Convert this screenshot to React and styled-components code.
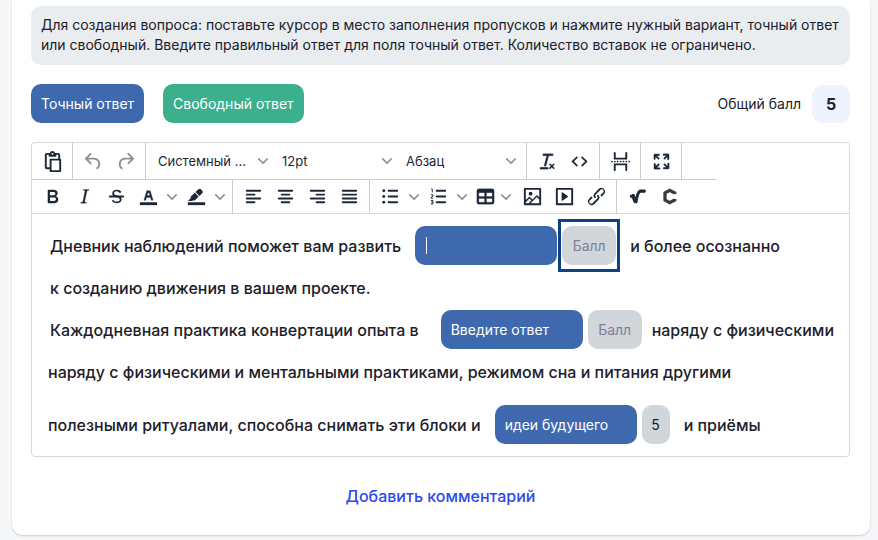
import React from "react";
import styled, { createGlobalStyle } from "styled-components";

const GlobalStyle = createGlobalStyle`
  *, *::before, *::after { box-sizing: border-box; }
  body {
    margin: 0;
    min-height: 100vh;
    background: #f5f7f9;
    color: #20202a;
    font-family: Inter, "Liberation Sans", sans-serif;
  }
  button, input, select { font: inherit; }
`;

const Card = styled.main`
  margin: 0 8px 4px 12px;
  padding: 6px 20px 28px 19px;
  background: #fff;
  border-radius: 0 0 10px 10px;
  box-shadow: 0 1px 2px #c9ced4;
`;

const Hint = styled.p`
  margin: 0 0 19px;
  padding: 9px 9px 10px 10px;
  border-radius: 10px;
  background: #e9edf0;
  font-size: 14px;
  line-height: 20px;
`;

const Actions = styled.div`
  display: flex;
  align-items: center;
  gap: 19px;
  margin-bottom: 19px;
`;

const ActionButton = styled.button`
  height: 39px;
  padding: 0 10px;
  border: 0;
  border-radius: 10px;
  background: ${(p) => (p.$tone === "green" ? "#3cb08c" : "#3f69af")};
  color: #fff;
  font-size: 14px;
  white-space: nowrap;
`;

const Total = styled.div`
  display: flex;
  align-items: center;
  gap: 11px;
  margin-left: auto;
  font-size: 14px;
`;

const TotalValue = styled.output`
  display: grid;
  place-items: center;
  width: 38px;
  height: 38px;
  border-radius: 10px;
  background: #edf4ff;
  font-size: 16px;
  font-weight: 700;
`;

const Editor = styled.section`
  border: 1px solid #d3dade;
  border-radius: 4px;
`;

const Toolbar = styled.div`
  border-bottom: 1px solid #d3d8dc;
`;

const ToolRow = styled.div`
  display: flex;
  width: fit-content;
  height: ${(p) => (p.$first ? "37px" : "33px")};
  padding-right: ${(p) => (p.$first ? "34px" : "0")};
  border-bottom: ${(p) => (p.$first ? "1px solid #cccccc" : "0")};
`;

const ToolGroup = styled.div`
  display: flex;
  align-items: center;
  padding: 0 4px;
  border-right: ${(p) => (p.$last ? "0" : "1px solid #cccccc")};
`;

const ToolButton = styled.button`
  display: grid;
  place-items: center;
  width: ${(p) => (p.$narrow ? "30px" : "32px")};
  height: 28px;
  padding: 0;
  border: 0;
  background: transparent;
  color: ${(p) => (p.$muted ? "#8b9099" : "#1c2838")};
`;

const MoreButton = styled.button`
  display: grid;
  place-items: center;
  width: ${(p) => (p.$narrow ? "12px" : "16px")};
  height: 28px;
  margin-right: ${(p) => (p.$narrow ? "4px" : "0")};
  padding: 0;
  border: 0;
  background: transparent;
  color: #8b9099;
`;

const Picker = styled.label`
  display: grid;
  grid-template-columns: 102px 22px;
  align-items: center;
  color: #8b9099;

  svg {
    grid-area: 1 / 2;
    justify-self: center;
    pointer-events: none;
  }
`;

const PickerSelect = styled.select`
  grid-area: 1 / 1 / 2 / 3;
  height: 28px;
  padding: 0 22px 0 8px;
  border: 0;
  background: transparent;
  color: #1c2838;
  font-size: 13px;
  appearance: none;
`;

const Body = styled.div`
  padding: 12px 14px 12px 16px;
  font-size: 16px;
  font-weight: 500;
  white-space: nowrap;
`;

const Line = styled.div`
  display: flex;
  align-items: center;
  min-height: ${(p) => (p.$blank ? "39px" : "45px")};
  padding-left: ${(p) => (p.$inset ? "2px" : "0")};
  margin-top: ${(p) => (p.$spaced ? "11px" : "0")};
`;

const Gap = styled.span`
  display: flex;
  align-items: center;
  gap: 5px;
  margin: ${(p) => (p.$wide ? "0 10px 0 22px" : "0 14px")};
`;

const AnswerInput = styled.input`
  width: 142px;
  height: 39px;
  padding: 0 10px;
  border: 0;
  border-radius: 10px;
  outline: 0;
  background: ${(p) =>
    p.$caret
      ? "linear-gradient(#fff, #fff) 11px center / 1px 17px no-repeat #3f69af"
      : "#3f69af"};
  color: #fff;
  font-size: 14px;
  font-weight: 400;

  &::placeholder { color: #fff; opacity: 1; }
`;

const ScoreInput = styled.input`
  width: ${(p) => (p.$short ? "28px" : "54px")};
  height: 39px;
  padding: 0;
  border: 0;
  border-radius: 10px;
  outline: 0;
  background: #d0d6d9;
  color: #20202a;
  font-size: 14px;
  font-weight: 400;
  text-align: center;

  &::placeholder { color: #80809a; opacity: 1; }
`;

const FocusFrame = styled.span`
  display: flex;
  margin: -7px -4px;
  padding: 4px 1px;
  border: 3px solid #0d4384;
`;

const CommentButton = styled.button`
  display: block;
  margin: 28px auto 0;
  padding: 0;
  border: 0;
  background: transparent;
  color: #2c49ee;
  font-size: 16px;
  font-weight: 500;
  line-height: 22px;
`;

const ICONS = {
  paste: (
    <path d="M18 9V5h-2v1c0 .6-.4 1-1 1H9a1 1 0 0 1-1-1V5H6v13h3V9h9ZM9 20H6a2 2 0 0 1-2-2V5c0-1.1.9-2 2-2h3.2A3 3 0 0 1 12 1a3 3 0 0 1 2.800 2H18a2 2 0 0 1 2 2v4c.6 0 1 .4 1 1v12c0 .6-.4 1-1 1H10a1 1 0 0 1-1-1v-2Zm2-9v10h8V11h-8Zm1-8a1 1 0 1 0 0 2 1 1 0 0 0 0-2Z" fillRule="evenodd" />
  ),
  undo: <path d="M6.4 8H12c3.7 0 6.2 2 6.8 5.1.6 2.7-.4 5.6-2.3 6.8a1 1 0 0 1-1-1.8c1.1-.6 1.8-2.7 1.4-4.6-.5-2.1-2.1-3.5-4.9-3.5H6.4l3.3 3.3a1 1 0 1 1-1.4 1.4l-5-5a1 1 0 0 1 0-1.4l5-5a1 1 0 0 1 1.4 1.4L6.4 8Z" />,
  redo: <path d="M17.6 10H12c-2.8 0-4.4 1.4-4.9 3.5-.4 2 .3 4 1.4 4.6a1 1 0 1 1-1 1.8c-2-1.2-2.9-4.1-2.3-6.8.6-3 3-5.1 6.8-5.1h5.6l-3.3-3.3a1 1 0 1 1 1.4-1.4l5 5a1 1 0 0 1 0 1.4l-5 5a1 1 0 0 1-1.4-1.4l3.3-3.3Z" />,
  clear: <path d="M13.2 6a1 1 0 0 1 0 .2l-2.6 10a1 1 0 0 1-1 .8h-.2a.8.8 0 0 1-.8-1l2.6-10H8a1 1 0 1 1 0-2h9a1 1 0 0 1 0 2h-3.8ZM5 18h7a1 1 0 0 1 0 2H5a1 1 0 0 1 0-2Zm13 1.5L16.500 18 15 19.5a.7.7 0 0 1-1-1l1.5-1.5-1.5-1.5a.7.7 0 0 1 1-1l1.5 1.5 1.5-1.5a.7.7 0 0 1 1 1L17.500 17l1.500 1.5a.7.7 0 0 1-1 1Z" stroke="currentColor" strokeWidth=".3" />,
  code: <path d="M9.8 15.7c.3.3.3.8 0 1-.3.4-.9.4-1.2 0l-4.4-4.1a.8.8 0 0 1 0-1.2l4.4-4.2c.3-.3.9-.3 1.2 0 .3.3.3.8 0 1.1L6 12l3.8 3.7ZM14.2 15.7c-.3.3-.3.8 0 1 .4.4.9.4 1.2 0l4.4-4.1c.3-.3.3-.9 0-1.2l-4.4-4.2a.8.8 0 0 0-1.2 0c-.3.3-.3.8 0 1.1L18 12l-3.8 3.7Z" stroke="currentColor" strokeWidth=".3" />,
  pageBreak: (
    <>
      <path d="M7 3v5h10V3c0-.6.4-1 1-1s1 .4 1 1v7H5V3c0-.6.4-1 1-1s1 .4 1 1ZM6 22a1 1 0 0 1-1-1v-7h14v7c0 .6-.4 1-1 1a1 1 0 0 1-1-1v-5H7v5c0 .6-.4 1-1 1Z" />
      <path d="M3 12h.1M6 12h.1M9 12h.1M12 12h.1M15 12h.1M18 12h.1M21 12h.1" stroke="currentColor" strokeWidth="1.8" strokeLinecap="round" />
    </>
  ),
  fullscreen: <path d="m15.3 10-1.2-1.3 2.9-3h-2.3a.9.9 0 1 1 0-1.7H19c.5 0 .9.4.9.9v4.4a.9.9 0 1 1-1.8 0V7l-2.8 3Zm0 4 3 3v-2.3a.9.9 0 1 1 1.7 0V19c0 .5-.4.9-.9.9h-4.4a.9.9 0 1 1 0-1.8H17l-3-2.9 1.3-1.2ZM10 15.4l-2.9 3h2.3a.9.9 0 1 1 0 1.7H5a.9.9 0 0 1-.9-.9v-4.4a.9.9 0 1 1 1.8 0V17l2.9-3 1.2 1.4ZM8.700 10 5.700 7v2.300a.9.9 0 0 1-1.7 0V5c0-.5.4-.9.9-.9h4.4a.9.9 0 0 1 0 1.800H7l3 2.900L8.700 10Z" stroke="currentColor" strokeWidth=".3" />,
  bold: <path d="M7.8 19c-.3 0-.5 0-.6-.2l-.2-.5V5.7c0-.2 0-.4.2-.5l.6-.2h5c1.5 0 2.7.3 3.5 1 .7.6 1.1 1.4 1.1 2.5a3 3 0 0 1-.6 1.9c-.4.6-1 1-1.6 1.2.4.1.9.3 1.3.6s.8.7 1 1.2c.4.4.5 1 .5 1.6 0 1.3-.4 2.3-1.3 3-.8.7-2.1 1-3.8 1H7.8Zm5-8.3c.6 0 1.2-.1 1.6-.5.4-.3.6-.7.6-1.3 0-1.1-.8-1.7-2.3-1.7H9.3v3.5h3.4Zm.5 6c.7 0 1.3-.1 1.7-.4.4-.4.6-.9.6-1.5s-.2-1-.7-1.4c-.4-.3-1-.4-2-.4H9.4v3.8h4Z" fillRule="evenodd" />,
  italic: <path d="m16.7 4.7-.1.9h-.3c-.6 0-1 0-1.4.3-.3.3-.4.6-.5 1.1l-2.1 9.8v.6c0 .5.4.8 1.4.8h.2l-.2.8H8l.2-.8h.2c1.1 0 1.8-.5 2-1.5l2-9.8.1-.5c0-.6-.4-.8-1.4-.8h-.3l.2-.9h5.7Z" stroke="currentColor" strokeWidth=".3" />,
  strike: (
    <>
      <path d="M15.6 8.5c-.5-.7-1-1.1-1.3-1.3-.6-.4-1.3-.6-2-.6-2.7 0-2.8 1.7-2.8 2.1 0 1.6 1.8 2 3.2 2.3 4.4.9 4.6 2.8 4.6 3.9 0 1.4-.7 4.1-5 4.1A6.2 6.2 0 0 1 7 16.4l1.5-1.1c.4.6 1.6 2 3.7 2 1.6 0 2.5-.4 3-1.2.4-.8.3-2-.8-2.6-.7-.4-1.6-.7-2.9-1-1-.2-3.9-.8-3.9-3.6C7.6 6 10.3 5 12.4 5c2.9 0 4.2 1.6 4.7 2.4l-1.5 1.1Z" />
      <path d="M5 11h14a1 1 0 0 1 0 2H5a1 1 0 0 1 0-2Z" />
    </>
  ),
  textColor: (
    <>
      <path d="M3 18h18v3H3z" />
      <path d="M8.7 16h-.8a.5.5 0 0 1-.5-.6l2.7-9c.1-.3.3-.4.5-.4h2.8c.2 0 .4.1.5.4l2.7 9a.5.5 0 0 1-.5.6h-.8a.5.5 0 0 1-.4-.4l-.7-2.2c0-.3-.3-.4-.5-.4h-3.4c-.2 0-.4.1-.5.4l-.7 2.2c0 .3-.2.4-.4.4Zm2.6-7.6-.6 2a.5.5 0 0 0 .5.6h1.6a.5.5 0 0 0 .5-.6l-.6-2c0-.3-.3-.4-.5-.4h-.4c-.2 0-.4.1-.5.4Z" fillRule="evenodd" stroke="currentColor" strokeWidth=".4" />
    </>
  ),
  highlight: (
    <>
      <path d="M3 18h18v3H3z" />
      <path d="M7.7 16.7H3l3.3-3.3-.7-.8L10.2 8l4 4.1-4 4.2c-.2.2-.6.2-.8 0l-.6-.7-1.1 1.1Zm5-7.5L11 7.4l3-2.9a2 2 0 0 1 2.6 0L18 6c.7.7.7 2 0 2.7l-2.9 2.9-2.4-2.4Z" />
    </>
  ),
  alignLeft: <path d="M5 6h14M5 10h8M5 14h14M5 18h8" stroke="currentColor" strokeWidth="2" strokeLinecap="round" />,
  alignCenter: <path d="M5 6h14M8 10h8M5 14h14M8 18h8" stroke="currentColor" strokeWidth="2" strokeLinecap="round" />,
  alignRight: <path d="M5 6h14M11 10h8M5 14h14M11 18h8" stroke="currentColor" strokeWidth="2" strokeLinecap="round" />,
  justify: <path d="M5 6h14M5 10h14M5 14h14M5 18h14" stroke="currentColor" strokeWidth="2" strokeLinecap="round" />,
  bullets: (
    <>
      <path d="M10 6h9M10 12h9M10 18h9" stroke="currentColor" strokeWidth="2" strokeLinecap="round" />
      <circle cx="5" cy="6" r="1.5" />
      <circle cx="5" cy="12" r="1.5" />
      <circle cx="5" cy="18" r="1.5" />
    </>
  ),
  numbers: (
    <>
      <path d="M10 6h9M10 12h9M10 18h9" stroke="currentColor" strokeWidth="2" strokeLinecap="round" />
      <path d="M4.400 4.200h1.100v3.600M4 10.200h2.200v1.500L4.200 13v.8h2.200M4 16.200h2.200v3.600H4M4.400 18h1.800" fill="none" stroke="currentColor" strokeWidth="1" />
    </>
  ),
  table: <path d="M19 4a2 2 0 0 1 2 2v12a2 2 0 0 1-2 2H5a2 2 0 0 1-2-2V6c0-1.1.9-2 2-2h14ZM5 14v4h6v-4H5Zm14 0h-6v4h6v-4Zm0-6h-6v4h6V8ZM5 12h6V8H5v4Z" fillRule="evenodd" stroke="currentColor" strokeWidth=".3" />,
  image: <path d="m5 15.7 3.3-3.2c.3-.3.7-.3 1 0L12 15l4.1-4c.3-.4.8-.4 1 0l1.9 1.900V5H5v10.7ZM5 18v1h3l2.8-2.9-2-2L5 18Zm14-3-2.5-2.4-6.4 6.4H19v-4ZM4 3h16c.6 0 1 .4 1 1v16c0 .6-.4 1-1 1H4a1 1 0 0 1-1-1V4c0-.6.4-1 1-1Zm6 8a2 2 0 1 0 0-4 2 2 0 0 0 0 4Z" fillRule="evenodd" />,
  media: <path d="M4 3h16c.6 0 1 .4 1 1v16c0 .6-.4 1-1 1H4a1 1 0 0 1-1-1V4c0-.6.4-1 1-1Zm1 2v14h14V5H5Zm4.8 2.6 5.6 4a.5.5 0 0 1 0 .8l-5.6 4A.5.5 0 0 1 9 16V8a.5.5 0 0 1 .8-.4Z" fillRule="evenodd" />,
  link: <path d="M6.2 12.3a1 1 0 0 1 1.4 1.4l-2 2a2 2 0 1 0 2.6 2.8l4.8-4.8a1 1 0 0 0 0-1.4 1 1 0 1 1 1.4-1.3 2.9 2.9 0 0 1 0 4L9.6 20a3.9 3.9 0 0 1-5.5-5.5l2.1-2.2Zm11.6-.6a1 1 0 0 1-1.4-1.4l2-2a2 2 0 1 0-2.6-2.8L11 10.3a1 1 0 0 0 0 1.4A1 1 0 1 1 9.6 13a2.9 2.9 0 0 1 0-4L14.4 4a3.9 3.9 0 0 1 5.5 5.5l-2.1 2.2Z" />,
  root: <path d="M4.500 11 8.200 9.500l1.900 4.500C11 9.500 12.400 5.600 14.500 5.200H20v2.300h-4.500c-2 .5-3.200 5-4 11H8.600L6.300 12.500l-1.500.5Z" stroke="currentColor" strokeWidth="1" />,
  chem: <path d="M17.500 9.400V8.300L12.200 5.500 7.300 8.300v7.400l4.900 2.800 5.300-2.800v-1.100" fill="none" stroke="#3b3b3b" strokeWidth="3.400" />,
};

function Icon({ name }) {
  return (
    <svg width="23" height="23" viewBox="0 0 24 24" fill="currentColor" aria-hidden="true">
      {ICONS[name]}
    </svg>
  );
}

function Chevron() {
  return (
    <svg width="10" height="10" viewBox="0 0 10 10" fill="currentColor" aria-hidden="true">
      <path d="M8.700 2.200c.3-.3.8-.3 1 0 .4.4.4.9 0 1.200L5.700 7.800c-.3.3-.9.3-1.200 0L.2 3.400a.8.8 0 0 1 0-1.200c.3-.3.8-.3 1.100 0L5 6l3.700-3.800Z" />
    </svg>
  );
}

function Tool({ icon, label, muted, more, narrow }) {
  return (
    <>
      <ToolButton type="button" aria-label={label} $muted={muted} $narrow={narrow}>
        <Icon name={icon} />
      </ToolButton>
      {more && (
        <MoreButton type="button" aria-label={`${label}: варианты`} $narrow={narrow}>
          <Chevron />
        </MoreButton>
      )}
    </>
  );
}

function Select({ label, value }) {
  return (
    <Picker>
      <PickerSelect aria-label={label} defaultValue={value}>
        <option>{value}</option>
      </PickerSelect>
      <Chevron />
    </Picker>
  );
}

export default function App() {
  return (
    <>
      <GlobalStyle />
      <Card>
        <Hint>
          Для создания вопроса: поставьте курсор в место заполнения пропусков и нажмите нужный
          вариант, точный ответ или свободный. Введите правильный ответ для поля точный ответ.
          Количество вставок не ограничено.
        </Hint>

        <Actions>
          <ActionButton type="button">Точный ответ</ActionButton>
          <ActionButton type="button" $tone="green">Свободный ответ</ActionButton>
          <Total>
            <span id="total-label">Общий балл</span>
            <TotalValue aria-labelledby="total-label">5</TotalValue>
          </Total>
        </Actions>

        <Editor>
          <Toolbar role="toolbar">
            <ToolRow $first>
              <ToolGroup>
                <Tool icon="paste" label="Вставить" />
              </ToolGroup>
              <ToolGroup>
                <Tool icon="undo" label="Отменить" muted />
                <Tool icon="redo" label="Повторить" muted />
              </ToolGroup>
              <ToolGroup>
                <Select label="Шрифт" value="Системный ..." />
                <Select label="Размер шрифта" value="12pt" />
                <Select label="Формат" value="Абзац" />
              </ToolGroup>
              <ToolGroup>
                <Tool icon="clear" label="Очистить формат" />
                <Tool icon="code" label="Исходный код" />
              </ToolGroup>
              <ToolGroup>
                <Tool icon="pageBreak" label="Разрыв страницы" />
              </ToolGroup>
              <ToolGroup>
                <Tool icon="fullscreen" label="Полный экран" />
              </ToolGroup>
            </ToolRow>
            <ToolRow>
              <ToolGroup>
                <Tool icon="bold" label="Полужирный" />
                <Tool icon="italic" label="Курсив" />
                <Tool icon="strike" label="Зачёркнутый" />
                <Tool icon="textColor" label="Цвет текста" more />
                <Tool icon="highlight" label="Цвет фона" more />
              </ToolGroup>
              <ToolGroup>
                <Tool icon="alignLeft" label="По левому краю" />
                <Tool icon="alignCenter" label="По центру" />
                <Tool icon="alignRight" label="По правому краю" />
                <Tool icon="justify" label="По ширине" />
              </ToolGroup>
              <ToolGroup>
                <Tool icon="bullets" label="Маркированный список" more />
                <Tool icon="numbers" label="Нумерованный список" more />
                <Tool icon="table" label="Таблица" more narrow />
                <Tool icon="image" label="Изображение" />
                <Tool icon="media" label="Видео" />
                <Tool icon="link" label="Ссылка" />
              </ToolGroup>
              <ToolGroup $last>
                <Tool icon="root" label="Формула" />
                <Tool icon="chem" label="Химическая формула" />
              </ToolGroup>
            </ToolRow>
          </Toolbar>

          <Body>
            <Line $blank $inset>
              Дневник наблюдений поможет вам развить
              <Gap>
                <AnswerInput type="text" aria-label="Ответ 1" $caret />
                <FocusFrame>
                  <ScoreInput type="text" aria-label="Балл за ответ 1" placeholder="Балл" />
                </FocusFrame>
              </Gap>
              и более осознанно
            </Line>
            <Line $inset>к созданию движения в вашем проекте.</Line>
            <Line $blank $inset>
              Каждодневная практика конвертации опыта в
              <Gap $wide>
                <AnswerInput type="text" aria-label="Ответ 2" placeholder="Введите ответ" />
                <ScoreInput type="text" aria-label="Балл за ответ 2" placeholder="Балл" />
              </Gap>
              наряду с физическими
            </Line>
            <Line>наряду с физическими и ментальными практиками, режимом сна и питания другими</Line>
            <Line $blank $spaced>
              полезными ритуалами, способна снимать эти блоки и
              <Gap>
                <AnswerInput type="text" aria-label="Ответ 3" defaultValue="идеи будущего" />
                <ScoreInput type="text" aria-label="Балл за ответ 3" defaultValue="5" $short />
              </Gap>
              и приёмы
            </Line>
          </Body>
        </Editor>

        <CommentButton type="button">Добавить комментарий</CommentButton>
      </Card>
    </>
  );
}
